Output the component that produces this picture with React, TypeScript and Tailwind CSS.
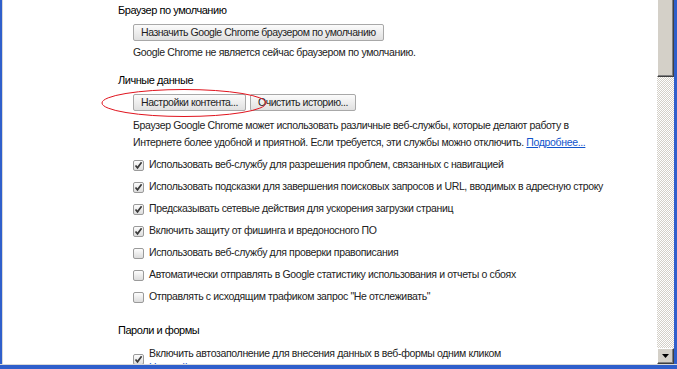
import { Fragment } from 'react'

const font = { fontFamily: '"Liberation Sans", Arial, sans-serif' }

function Checkbox({ checked }: { checked: boolean }) {
  return (
    <span className="relative flex h-[11px] w-[11px] shrink-0 items-center justify-center rounded-[2px] border border-[#9a9a9a] bg-gradient-to-b from-[#fdfdfd] to-[#dcdcdc]">
      {checked && (
        <svg width="9" height="9" viewBox="0 0 9 9" className="absolute">
          <path d="M1.5 4.5 L3.5 6.8 L7.6 1.2" stroke="#3a3a3a" strokeWidth="1.7" fill="none" />
        </svg>
      )}
    </span>
  )
}

function Button({ children }: { children: React.ReactNode }) {
  return (
    <button className="flex h-[17px] items-center rounded-[2px] border border-[#a8a8a8] bg-gradient-to-b from-[#fbfbfb] to-[#e0e0e0] px-[7px] text-[10.5px] tracking-[-0.45px] text-[#1e1e1e]">
      {children}
    </button>
  )
}

const options = [
  { label: 'Использовать веб-службу для разрешения проблем, связанных с навигацией', checked: true },
  { label: 'Использовать подсказки для завершения поисковых запросов и URL, вводимых в адресную строку', checked: true },
  { label: 'Предсказывать сетевые действия для ускорения загрузки страниц', checked: true },
  { label: 'Включить защиту от фишинга и вредоносного ПО', checked: true },
  { label: 'Использовать веб-службу для проверки правописания', checked: false },
  { label: 'Автоматически отправлять в Google статистику использования и отчеты о сбоях', checked: false },
  { label: 'Отправлять с исходящим трафиком запрос "Не отслеживать"', checked: false },
]

export default function App() {
  return (
    <div className="flex h-[369px] w-[677px] flex-col overflow-hidden bg-white" style={font}>
      <div className="flex min-h-0 flex-1">
        <div className="w-[2px] bg-[#2f5fcb]" />
        <div className="w-px bg-[#d8d8d8]" />

        {/* settings page */}
        <div className="relative flex-1 overflow-hidden bg-white pl-[115px] text-[10.5px] tracking-[-0.35px] text-[#222]">
          <div className="h-[20px] text-[11px] leading-[20px] tracking-[-0.45px] text-black">Браузер по умолчанию</div>
          <div className="mt-[4px] pl-[15px]">
            <Button>Назначить Google Chrome браузером по умолчанию</Button>
          </div>
          <div className="pl-[15px] leading-[16px] mt-[3px]">
            Google Chrome не является сейчас браузером по умолчанию.
          </div>

          <div className="mt-[10px] h-[20px] text-[11px] leading-[20px] tracking-[-0.45px] text-black">Личные данные</div>
          <div className="mt-[4px] flex gap-[4px] pl-[15px]">
            <Button>Настройки контента...</Button>
            <Button>Очистить историю...</Button>
          </div>
          <div className="mt-[6px] pl-[15px] leading-[17px]">
            Браузер Google Chrome может использовать различные веб-службы, которые делают работу в
            <br />
            Интернете более удобной и приятной. Если требуется, эти службы можно отключить.{' '}
            <span className="text-[#1155cc] underline">Подробнее...</span>
          </div>

          <div className="mt-[3px] pl-[15px]">
            {options.map((o) => (
              <Fragment key={o.label}>
                <div className="flex h-[22px] items-center gap-[5px] whitespace-nowrap">
                  <Checkbox checked={o.checked} />
                  <span>{o.label}</span>
                </div>
              </Fragment>
            ))}
          </div>

          <div className="mt-[12px] h-[20px] text-[11px] leading-[20px] tracking-[-0.45px] text-black">Пароли и формы</div>
          <div className="mt-[6px] flex gap-[5px] pl-[15px]">
            <div className="mt-[8px]">
              <Checkbox checked />
            </div>
            <div className="leading-[14px]">
              <div>Включить автозаполнение для внесения данных в веб-формы одним кликом</div>
              <div className="text-[#1155cc] underline">Настройки автозаполнения</div>
            </div>
          </div>

          {/* red annotation ellipse */}
          <svg className="absolute left-[97px] top-[88px]" width="168" height="30" viewBox="0 0 168 30">
            <ellipse cx="84" cy="15" rx="82" ry="13.5" stroke="#e0141e" strokeWidth="1" fill="none" />
          </svg>
        </div>

        {/* scrollbar */}
        <div className="flex w-[17px] flex-col">
          <div className="h-[77px] border-l border-l-white border-r border-r-[#404040] border-b border-b-[#404040] bg-[#d4d0c8] shadow-[inset_-1px_-1px_0_#808080]" />
          <div className="flex-1 bg-[repeating-conic-gradient(#d4d0c8_0_25%,#ffffff_0_50%)] bg-[length:2px_2px]" />
          <div className="flex h-[16px] items-center justify-center border-t border-l border-t-white border-l-white border-r border-b border-r-[#404040] border-b-[#404040] bg-[#d4d0c8] shadow-[inset_-1px_-1px_0_#808080]">
            <svg width="7" height="4" viewBox="0 0 7 4">
              <path d="M0 0 H7 L3.5 4 Z" fill="#000" />
            </svg>
          </div>
        </div>
        <div className="w-[3px] bg-[#2f5fcb]" />
      </div>
      <div className="h-px bg-[#d8d8d8]" />
      <div className="h-[4px] bg-[#2f5fcb]" />
    </div>
  )
}
